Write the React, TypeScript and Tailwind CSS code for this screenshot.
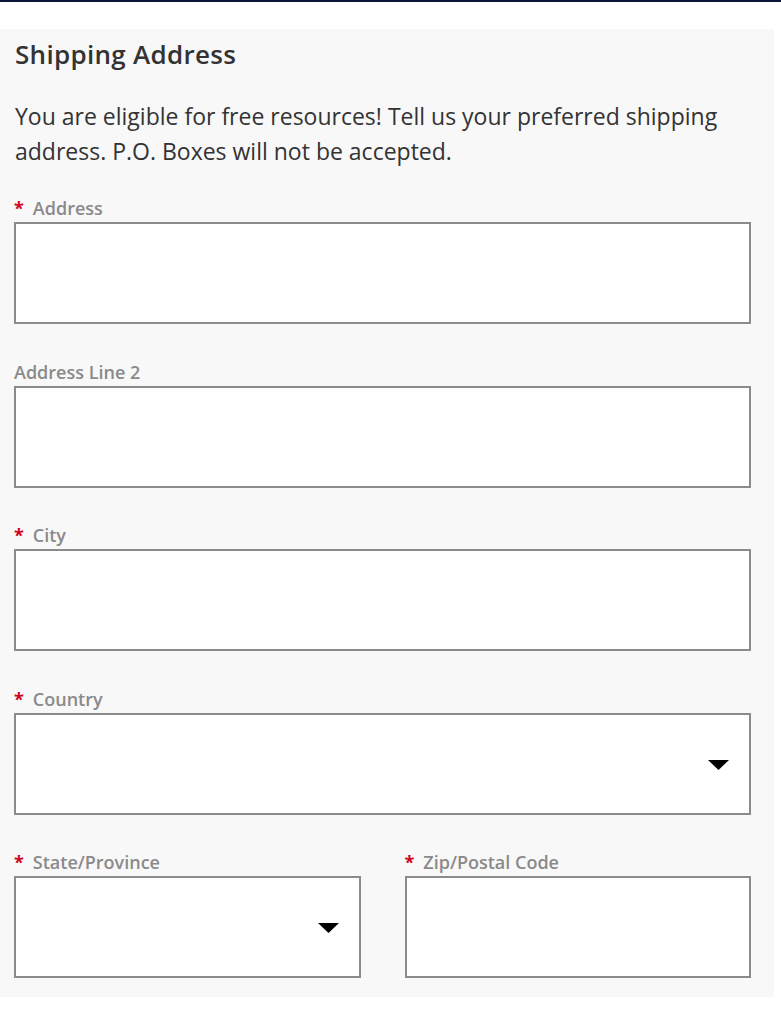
import React from 'react';

const font = { fontFamily: '"Open Sans", "Noto Sans", sans-serif' };

function Label({ text, required }: { text: string; required?: boolean }) {
  return (
    <div className="flex items-center h-6 mb-[2px] text-[18px] leading-6 font-semibold text-[#8a8a8a]">
      {required && <span className="text-[#d0021b] mr-[9px] text-[18px] font-bold">*</span>}
      <span>{text}</span>
    </div>
  );
}

function Box({ select }: { select?: boolean }) {
  return (
    <div className="relative h-[102px] border-2 border-[#898b8d] bg-white">
      {select && (
        <svg
          className="absolute right-[20px] top-[45px]"
          width="21"
          height="10"
          viewBox="0 0 21 10"
        >
          <path d="M0 0 H21 L10.5 10 Z" fill="#000" />
        </svg>
      )}
    </div>
  );
}

function Field({ label, required, select }: { label: string; required?: boolean; select?: boolean }) {
  return (
    <div>
      <Label text={label} required={required} />
      <Box select={select} />
    </div>
  );
}

export default function App() {
  return (
    <div className="min-h-screen bg-white" style={font}>
      <div className="h-[2px] bg-[#0b1237]" />
      <div className="mt-[27px] w-[774px] bg-[#f8f8f8] pl-[14px] pr-[23px] pt-[9px] pb-[19px]">
        <h2 className="text-[26px] leading-8 font-semibold text-[#333] pl-px tracking-[0.3px]">Shipping Address</h2>
        <p className="mt-[29px] text-[23px] leading-[35px] text-[#333] pl-px">
          You are eligible for free resources! Tell us your preferred shipping address. P.O. Boxes will not be accepted.
        </p>
        <div className="mt-[27px] flex flex-col gap-[35.5px]">
          <Field label="Address" required />
          <Field label="Address Line 2" />
          <Field label="City" required />
          <Field label="Country" required select />
          <div className="grid grid-cols-2 gap-[44px]">
            <Field label="State/Province" required select />
            <Field label="Zip/Postal Code" required />
          </div>
        </div>
      </div>
    </div>
  );
}
